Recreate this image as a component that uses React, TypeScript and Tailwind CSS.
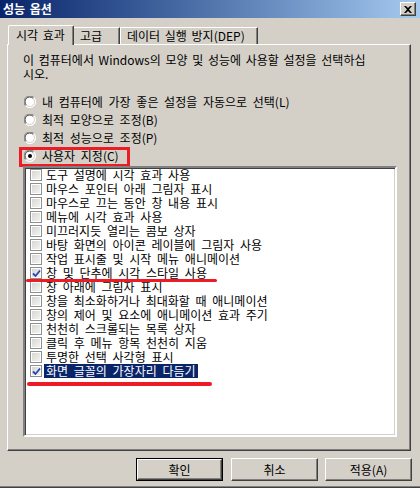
import React from "react";

const ITEMS: { label: string; checked?: boolean; selected?: boolean }[] = [
  { label: "도구 설명에 시각 효과 사용" },
  { label: "마우스 포인터 아래 그림자 표시" },
  { label: "마우스로 끄는 동안 창 내용 표시" },
  { label: "메뉴에 시각 효과 사용" },
  { label: "미끄러지듯 열리는 콤보 상자" },
  { label: "바탕 화면의 아이콘 레이블에 그림자 사용" },
  { label: "작업 표시줄 및 시작 메뉴 애니메이션" },
  { label: "창 및 단추에 시각 스타일 사용", checked: true },
  { label: "창 아래에 그림자 표시" },
  { label: "창을 최소화하거나 최대화할 때 애니메이션" },
  { label: "창의 제어 및 요소에 애니메이션 효과 주기" },
  { label: "천천히 스크롤되는 목록 상자" },
  { label: "클릭 후 메뉴 항목 천천히 지움" },
  { label: "투명한 선택 사각형 표시" },
  { label: "화면 글꼴의 가장자리 다듬기", checked: true, selected: true },
];

const RADIOS = [
  { label: "내 컴퓨터에 가장 좋은 설정을 자동으로 선택(L)" },
  { label: "최적 모양으로 조정(B)" },
  { label: "최적 성능으로 조정(P)" },
  { label: "사용자 지정(C)", on: true },
];

export default function App() {
  return (
    <div className="w-[420px] h-[488px] bg-[#d4d0c8] flex flex-col text-[12px] text-black font-['Noto_Sans_CJK_KR',sans-serif] [word-spacing:2px] shadow-[inset_0_-1px_#404040,inset_0_-2px_#808080] overflow-hidden">
      {/* title bar */}
      <div className="h-[18px] flex items-center justify-between pl-[3px] pr-[4px] bg-linear-to-r from-[#0a246a] to-[#a6caf0]">
        <span className="text-white font-bold leading-none">성능 옵션</span>
        <button className="w-[16px] h-[14px] flex items-center justify-center bg-[#d4d0c8] border border-t-white border-l-white border-r-[#404040] border-b-[#404040] shadow-[inset_-1px_-1px_#808080]">
          <svg width="8" height="7" viewBox="0 0 8 7">
            <path d="M0 0 L2 0 L4 2 L6 0 L8 0 L5 3.5 L8 7 L6 7 L4 5 L2 7 L0 7 L3 3.5 Z" fill="#000" />
          </svg>
        </button>
      </div>

      {/* tabs */}
      <div className="h-[26px] flex items-end pl-[8px] relative z-10">
        <div className="w-[66px] h-[20px] -mb-[1px] bg-[#d4d0c8] border-t border-l border-white border-r border-r-[#404040] rounded-t-[2px] shadow-[inset_-1px_0_#808080] pl-[7px] pt-[1px] leading-[16px]">
          시각 효과
        </div>
        <div className="w-[46px] h-[17px] border-t border-white border-r border-r-[#404040] shadow-[inset_-1px_0_#808080] pl-[6px] leading-[16px]">
          고급
        </div>
        <div className="w-[138px] h-[17px] border-t border-l border-white border-r border-r-[#404040] shadow-[inset_-1px_0_#808080] pl-[6px] leading-[16px]">
          데이터 실행 방지(DEP)
        </div>
      </div>

      {/* panel */}
      <div className="ml-[7px] w-[404px] h-[407px] border border-t-white border-l-white border-r-[#404040] border-b-[#404040] shadow-[inset_-1px_-1px_#808080]">
        <p className="pl-[15px] pt-[8px] leading-[14px]">
          이 컴퓨터에서 Windows의 모양 및 성능에 사용할 설정을 선택하십
          <br />
          시오.
        </p>

        <div className="mt-[12px] flex flex-col [word-spacing:3px]">
          {RADIOS.map((r) => (
            <div key={r.label} className="relative h-[18px] flex items-center pl-[16px] gap-[6px]">
              <Radio on={r.on} />
              <span className="leading-none">{r.label}</span>
              {r.on && <div className="absolute left-[11px] top-0 w-[111px] h-[20px] border-[3px] border-[#ed1c24]" />}
            </div>
          ))}
        </div>

        {/* list */}
        <div className="relative mt-[1px] ml-[15px] w-[374px] h-[271px] bg-white border-2 border-t-[#808080] border-l-[#808080] border-r-white border-b-white shadow-[inset_1px_1px_#404040,inset_-1px_-1px_#d4d0c8] [word-spacing:3px]">
          {ITEMS.map((it) => (
            <div key={it.label} className="h-[14px] flex items-center pl-[5px] whitespace-nowrap">
              <Check on={it.checked} />
              <span
                className={`ml-[2px] px-[2px] h-[14px] leading-[14px] ${
                  it.selected ? "bg-[#0a246a] text-white" : ""
                }`}
              >
                {it.label}
              </span>
            </div>
          ))}
          <div className="absolute left-[1px] top-[111px] w-[191px] h-[3px] rounded-full bg-[#ed1c24]" />
          <div className="absolute left-[2px] top-[214px] w-[185px] h-[4px] rounded-full bg-[#ed1c24]" />
        </div>
      </div>

      {/* buttons */}
      <div className="mt-[7px] flex">
        <div className="ml-[136px] w-[87px] h-[23px] border border-black">
          <Btn label="확인" />
        </div>
        <div className="ml-[8px] w-[87px] h-[23px]">
          <Btn label="취소" />
        </div>
        <div className="ml-[7px] w-[87px] h-[23px]">
          <Btn label="적용(A)" />
        </div>
      </div>
    </div>
  );
}

function Btn({ label }: { label: string }) {
  return (
    <div className="w-full h-full flex items-center justify-center border border-t-white border-l-white border-r-[#404040] border-b-[#404040] shadow-[inset_-1px_-1px_#808080] leading-none">
      {label}
    </div>
  );
}

function Radio({ on }: { on?: boolean }) {
  return (
    <svg width="12" height="12" viewBox="0 0 12 12" className="shrink-0">
      <circle cx="6" cy="6" r="5.5" fill="#fff" />
      <path d="M1.6 9.9 A5.5 5.5 0 0 1 9.9 1.6" fill="none" stroke="#808080" strokeWidth="1" />
      <path d="M2.4 9.1 A4.4 4.4 0 0 1 9.1 2.4" fill="none" stroke="#404040" strokeWidth="1" />
      <path d="M9.9 1.6 A5.5 5.5 0 0 1 1.6 9.9" fill="none" stroke="#fff" strokeWidth="1" />
      <path d="M9.1 2.4 A4.4 4.4 0 0 1 2.4 9.1" fill="none" stroke="#d4d0c8" strokeWidth="1" />
      {on && <circle cx="6" cy="6" r="2" fill="#000" />}
    </svg>
  );
}

function Check({ on }: { on?: boolean }) {
  return (
    <div className="shrink-0 w-[12px] h-[12px] border border-[#8e8f8f] shadow-[inset_0_0_0_1px_#fff] bg-linear-to-br from-[#d3d3d0] to-[#f6f6f4] flex items-center justify-center">
      {on && (
        <svg width="9" height="9" viewBox="0 0 9 9">
          <path d="M1 4.5 L3.5 7 L8 1.5" fill="none" stroke="#2149b8" strokeWidth="1.8" />
        </svg>
      )}
    </div>
  );
}
